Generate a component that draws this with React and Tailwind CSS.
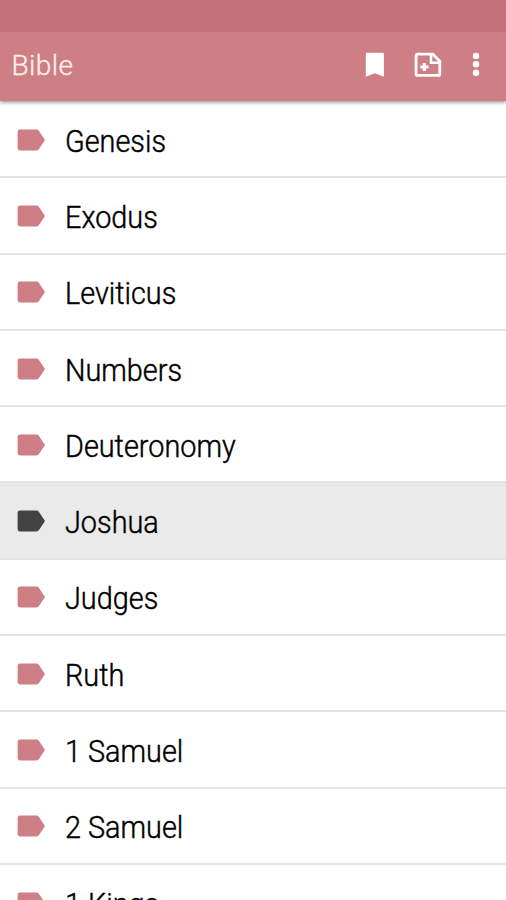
const books = [
  'Genesis',
  'Exodus',
  'Leviticus',
  'Numbers',
  'Deuteronomy',
  'Joshua',
  'Judges',
  'Ruth',
  '1 Samuel',
  '2 Samuel',
  '1 Kings',
];

function LabelIcon({ className }) {
  return (
    <svg viewBox="0 0 28 22" className={`h-[22px] w-7 shrink-0 ${className}`} fill="currentColor">
      <path d="M2.9 0.6H19.2Q21 0.6 22 2L28 10.9L22 20Q21 21.4 19.2 21.4H2.9Q0.6 21.4 0.6 19V3Q0.6 0.6 2.9 0.6Z" />
    </svg>
  );
}

function BookmarkIcon() {
  return (
    <svg viewBox="0 0 20 26" className="h-[26px] w-5" fill="currentColor">
      <path d="M2 0.8H17.6Q18.9 0.8 18.9 2.1V24.8L9.8 21.2L0.8 24.8V2.1Q0.8 0.8 2 0.8Z" />
    </svg>
  );
}

function NoteAddIcon() {
  return (
    <svg viewBox="0 0 28 26" className="h-[26px] w-7" fill="none" stroke="currentColor">
      <path
        d="M3.6 2.2H18.8L25.8 9.2V21.9Q25.8 23.4 24.3 23.4H3.6Q2.1 23.4 2.1 21.9V3.7Q2.1 2.2 3.6 2.2Z"
        strokeWidth="2.8"
      />
      <path d="M17 2.5V10.8H25.4" strokeWidth="2.6" />
      <path d="M10.4 10.9V19.1M6.3 15H14.5" strokeWidth="3.2" />
    </svg>
  );
}

function MoreIcon() {
  return (
    <svg viewBox="0 0 8 26" className="h-[26px] w-2" fill="currentColor">
      <circle cx="4" cy="3.9" r="3.2" />
      <circle cx="4" cy="12.3" r="3.2" />
      <circle cx="4" cy="20.7" r="3.2" />
    </svg>
  );
}

export default function App() {
  return (
    <div className="flex h-[900px] w-[506px] flex-col overflow-hidden bg-white font-['Roboto',sans-serif]">
      <div className="z-20 h-8 shrink-0 bg-[#c17177]" />
      <header className="z-10 flex h-[69px] shrink-0 items-center bg-[#ce7f85] pr-[26px] pb-1 pl-[11.5px] text-white shadow-[0_1px_4px_rgba(0,0,0,0.5)]">
        <h1 className="flex-1 pt-0.5 text-[28px] leading-8 font-light tracking-[0.4px] text-[#fff0eb] [-webkit-text-stroke:0.3px]">
          Bible
        </h1>
        <div className="flex items-center">
          <BookmarkIcon />
          <div className="ml-[29px] flex">
            <NoteAddIcon />
          </div>
          <div className="ml-[30px] flex">
            <MoreIcon />
          </div>
        </div>
      </header>
      <ul className="flex flex-col pt-px">
        {books.map((book) => {
          const selected = book === 'Joshua';
          return (
            <li
              key={book}
              className={`flex h-[76.3px] shrink-0 items-center border-b-2 border-[#e4e4e4] pt-px pl-[17px] ${
                selected ? 'bg-[#eaeaea]' : 'bg-white'
              }`}
            >
              <LabelIcon className={selected ? 'text-[#434343]' : 'text-[#ce7f86]'} />
              <span className="mt-[4px] ml-[19.5px] origin-left scale-x-[0.945] text-[30.5px] leading-9 font-light text-black [-webkit-text-stroke:0.45px]">
                {book}
              </span>
            </li>
          );
        })}
      </ul>
    </div>
  );
}
